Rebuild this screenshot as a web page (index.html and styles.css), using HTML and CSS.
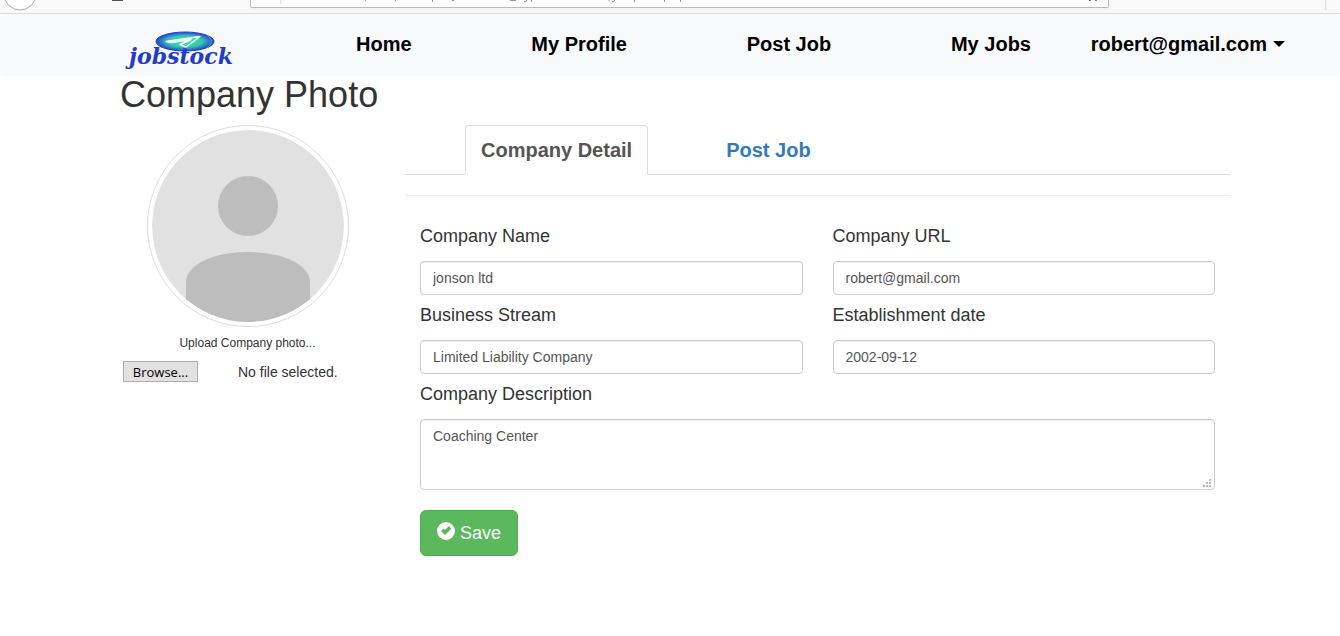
FILE: index.html
```html
<!DOCTYPE html>
<html lang="en">
<head>
<meta charset="utf-8">
<title>Jobstock - Company Detail</title>
<link rel="stylesheet" href="styles.css">
</head>
<body>
<div class="chrome" aria-hidden="true">
  <svg class="chrome-left" width="250" height="13" viewBox="0 0 250 13">
    <circle cx="20" cy="-6" r="16" fill="#fff" stroke="#aaa"/>
    <path d="M112 0h11" stroke="#555" stroke-width="2"/>
  </svg>
  <div class="address">
    <svg width="600" height="7" viewBox="0 0 600 7">
      <path d="M29.500 0V4" stroke="#ddd"/>
      <path d="M114.500 0v1M144.500 0v1M181.500 0v2M201 .500h2l1-1M259 .500h6M273 1.500h2l1-2M280.500 0v2M358 0v1M361 1.500h2l1-2M383.500 0v2M413.500 0v2M429.500 0v2" stroke="#999" fill="none"/>
    </svg>
    <svg class="star" width="14" height="7" viewBox="0 0 14 7"><path d="M2 0h2M8 0h2" stroke="#777" stroke-width="2"/></svg>
  </div>
  <div class="chrome-right"></div>
</div>
<header class="navbar">
  <a class="brand" href="#">
    <svg width="136" height="42" viewBox="0 0 136 42">
      <defs><radialGradient id="globe"><stop offset="0" stop-color="#43e8b0"/><stop offset=".6" stop-color="#34c5b1"/><stop offset="1" stop-color="#2541cf"/></radialGradient></defs>
      <ellipse cx="72" cy="12.500" rx="29" ry="9.500" fill="url(#globe)" stroke="#2740cf"/>
      <path d="M94 6q9 7 0 13" fill="none" stroke="#7d93e8" stroke-width=".8"/>
      <path d="M53 12.500L87 7.500 73 18 67 15.500 78 10.500 58 13.500Z" fill="none" stroke="#fff" stroke-width="1.400" stroke-linejoin="round"/>
      <text class="wordmark" x="68" y="35" text-anchor="middle">jobstock</text>
    </svg>
  </a>
  <nav class="menu">
    <a class="home" href="#">Home</a>
    <a class="profile" href="#">My Profile</a>
    <a class="post" href="#">Post Job</a>
    <a class="jobs" href="#">My Jobs</a>
    <button class="account" type="button">robert@gmail.com<span class="caret"></span></button>
  </nav>
</header>
<main class="container">
  <aside class="side">
    <h1>Company Photo</h1>
    <div class="photo">
      <svg class="avatar" viewBox="0 0 192 192" role="img" aria-label="Company photo">
        <defs><clipPath id="round"><circle cx="96" cy="96" r="96"/></clipPath></defs>
        <g clip-path="url(#round)"><path d="M0 0H192V192H0Z" fill="#e1e1e1"/><circle cx="96" cy="76" r="30" fill="#bdbdbd"/><path d="M34 192V153C34 134 62 122 96 122S158 134 158 153V192Z" fill="#bdbdbd"/></g>
      </svg>
      <p>Upload Company photo...</p>
    </div>
    <div class="upload">
      <button type="button">Browse...</button>
      <span>No file selected.</span>
    </div>
  </aside>
  <section class="content">
    <nav class="tabs">
      <a class="tab active" href="#">Company Detail</a>
      <a class="tab" href="#">Post Job</a>
    </nav>
    <hr>
    <form class="form">
      <div class="field"><label for="name">Company Name</label><input id="name" type="text" value="jonson ltd"></div>
      <div class="field"><label for="url">Company URL</label><input id="url" type="text" value="robert@gmail.com"></div>
      <div class="field"><label for="stream">Business Stream</label><input id="stream" type="text" value="Limited Liability Company"></div>
      <div class="field"><label for="date">Establishment date</label><input id="date" type="text" value="2002-09-12"></div>
      <div class="field wide">
        <label for="desc">Company Description</label>
        <div class="area"><textarea id="desc">Coaching Center</textarea>
          <svg class="grip" width="8" height="8" viewBox="0 0 8 8" fill="#bbb"><path d="M6 0h2v2h-2zM3 3h2v2h-2zM6 3h2v2h-2zM0 6h2v2h-2zM3 6h2v2h-2zM6 6h2v2h-2z"/></svg>
        </div>
      </div>
      <button class="save" type="submit"><svg width="18" height="22" viewBox="0 0 18 22"><circle cx="9" cy="9" r="9" fill="#fff"/><path d="M4 9l2.500-2.500L8 8l4-4 2.500 2.500L8 13Z" fill="#5cb85c"/></svg>Save</button>
    </form>
  </section>
</main>
</body>
</html>
```
FILE: styles.css
```css
* { box-sizing: border-box; }
body { margin: 0; background: #fff; color: #333; font: 14px/20px "Liberation Sans", Arial, sans-serif; }
a { text-decoration: none; }
button, input, textarea { font-family: inherit; }

.chrome { display: flex; height: 14px; overflow: hidden; background: #f9f9f9; border-bottom: 1px solid #ddd; }
.chrome-left { flex: none; }
.address { display: flex; justify-content: space-between; flex: 1; height: 8px; background: #fff; border: 1px solid #bbb; border-top: 0; border-radius: 0 0 2px 2px; box-shadow: 0 1px 2px #eee; }
.address svg { flex: none; }
.star { margin-right: 7px; }
.chrome-right { width: 217px; height: 10px; border-right: 1px solid #ddd; margin-right: 14px; }

.navbar { display: flex; align-items: flex-start; height: 62px; padding: 0 55px 0 113px; background: #f8f9fb; border-radius: 4px; }
.brand { display: block; flex: none; padding-top: 15px; }
.brand svg { display: block; overflow: visible; }
.wordmark { fill: #233bc5; font: italic 700 22px "DejaVu Serif", serif; }
.menu { display: flex; flex: 1; justify-content: space-between; padding: 18px 0 0 107px; }
.menu a, .account { color: #000; font-size: 20px; line-height: 24px; font-weight: 700; }
.home { margin-right: 60px; }
.post { margin-left: 60px; }
.jobs { margin-left: 60px; }
.account { display: flex; align-items: center; gap: 6px; padding: 0; border: 0; background: none; }
.caret { border: 6px solid transparent; border-top-color: #000; border-bottom: 0; }

.container { display: grid; grid-template-columns: minmax(0, 1fr) minmax(0, 3fr); max-width: 1150px; margin: 0 auto; padding-left: 10px; }
.side { padding: 0 15px; }
h1 { margin: 0 0 12px; font-size: 36px; line-height: 37px; font-weight: 400; white-space: nowrap; }
.photo { text-align: center; }
.avatar { display: block; width: 202px; margin: 0 auto; padding: 4px; border: 1px solid #ddd; border-radius: 50%; }
.photo p { margin: 6px 0 8px; font-size: 12px; }
.upload { display: flex; align-items: center; gap: 40px; padding-left: 3px; }
.upload button { width: 75px; height: 21px; padding: 0; border: 1px solid #adadad; background: #e1e1e1; color: #000; font: 13px/16px "Open Sans", sans-serif; }

.content { padding: 49px 15px 0; }
.tabs { display: flex; gap: 62px; padding-left: 60px; border-bottom: 1px solid #ddd; }
.tab { margin-bottom: -1px; padding: 10px 15px; border: 1px solid transparent; border-radius: 4px 4px 0 0; color: #337ab7; font-size: 20px; line-height: 28px; font-weight: 700; }
.tab.active { border-color: #ddd; border-bottom-color: #fff; background: #fff; color: #555; }
hr { margin: 20px 0; border: 0; border-top: 1px solid #eee; }
.form { display: grid; grid-template-columns: 1fr 1fr; column-gap: 30px; padding: 0 15px; }
.field { padding-top: 10px; }
.field label { display: block; margin-bottom: 15px; font-size: 18px; line-height: 20px; }
.field input, .field textarea { display: block; width: 100%; padding: 6px 12px; border: 1px solid #ccc; border-radius: 4px; background: #fff; color: #555; font-size: 14px; line-height: 20px; box-shadow: inset 0 1px 1px #eee; }
.field input { height: 34px; }
.wide { grid-column: 1 / -1; }
.area { position: relative; }
.field textarea { height: 71px; resize: none; }
.grip { position: absolute; right: 4px; bottom: 3px; }
.save { display: flex; align-items: center; justify-self: start; gap: 5px; margin-top: 20px; padding: 10px 16px; border: 1px solid #4cae4c; border-radius: 6px; background: #5cb85c; color: #fff; font-size: 18px; line-height: 24px; }
```
